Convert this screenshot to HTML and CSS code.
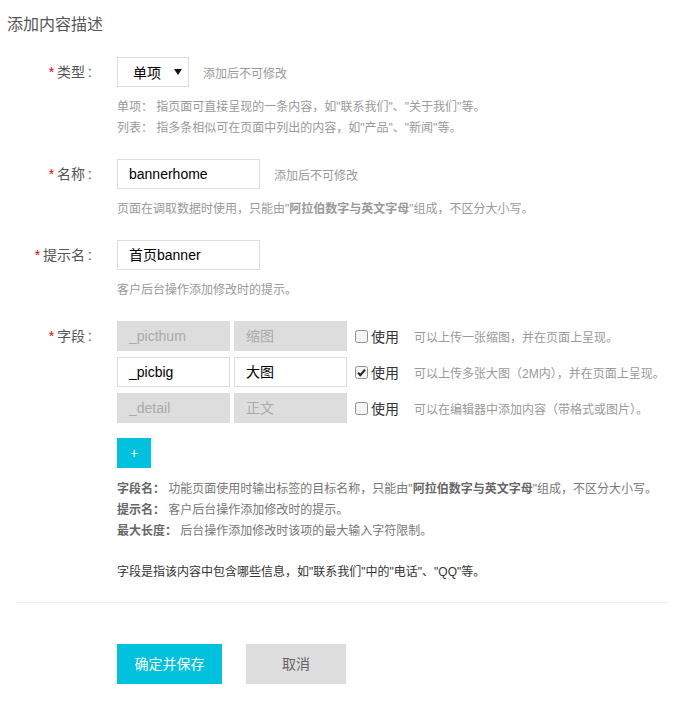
FILE: index.html
```html
<!DOCTYPE html>
<html lang="zh">
<head>
<meta charset="utf-8">
<title>添加内容描述</title>
<link rel="stylesheet" href="styles.css">
</head>
<body>
<h2 class="title">添加内容描述</h2>
<div class="form">
  <div class="row">
    <div class="label"><span class="req">*</span>类型<span class="colon">:</span></div>
    <div class="content">
      <div class="line">
        <div class="select"><span>单项</span><span class="caret"></span></div>
        <span class="hint">添加后不可修改</span>
      </div>
      <div class="desc">单项：&nbsp;指页面可直接呈现的一条内容，如"联系我们"、"关于我们"等。<br>列表：&nbsp;指多条相似可在页面中列出的内容，如"产品"、"新闻"等。</div>
    </div>
  </div>
  <div class="row">
    <div class="label"><span class="req">*</span>名称<span class="colon">:</span></div>
    <div class="content">
      <div class="line">
        <div class="input w143">bannerhome</div>
        <span class="hint">添加后不可修改</span>
      </div>
      <div class="desc">页面在调取数据时使用，只能由"<b>阿拉伯数字与英文字母</b>"组成，不区分大小写。</div>
    </div>
  </div>
  <div class="row">
    <div class="label"><span class="req">*</span>提示名<span class="colon">:</span></div>
    <div class="content">
      <div class="line">
        <div class="input w143">首页banner</div>
      </div>
      <div class="desc">客户后台操作添加修改时的提示。</div>
    </div>
  </div>
  <div class="row">
    <div class="label"><span class="req">*</span>字段<span class="colon">:</span></div>
    <div class="content">
      <div class="fields">
        <div class="line">
          <div class="input w113 disabled">_picthum</div>
          <div class="input w113 disabled gapl">缩图</div>
          <span class="check"><svg width="13" height="13" viewBox="0 0 13 13"><rect x="0.5" y="0.5" width="12" height="12" rx="2" fill="#f4f4f4" stroke="#8f8f8f"/></svg></span>
          <span class="use">使用</span>
          <span class="fdesc">可以上传一张缩图，并在页面上呈现。</span>
        </div>
        <div class="line">
          <div class="input w113">_picbig</div>
          <div class="input w113 gapl">大图</div>
          <span class="check"><svg width="13" height="13" viewBox="0 0 13 13"><rect x="0.5" y="0.5" width="12" height="12" rx="2" fill="#f4f4f4" stroke="#8f8f8f"/><path d="M3 6.8 L5.3 9.2 L10 3.6" fill="none" stroke="#222" stroke-width="2"/></svg></span>
          <span class="use">使用</span>
          <span class="fdesc">可以上传多张大图（2M内），并在页面上呈现。</span>
        </div>
        <div class="line">
          <div class="input w113 disabled">_detail</div>
          <div class="input w113 disabled gapl">正文</div>
          <span class="check"><svg width="13" height="13" viewBox="0 0 13 13"><rect x="0.5" y="0.5" width="12" height="12" rx="2" fill="#f4f4f4" stroke="#8f8f8f"/></svg></span>
          <span class="use">使用</span>
          <span class="fdesc">可以在编辑器中添加内容（带格式或图片）。</span>
        </div>
      </div>
      <div class="plus">+</div>
      <div class="notes">
        <b>字段名：</b>&nbsp;功能页面使用时输出标签的目标名称，只能由"<b>阿拉伯数字与英文字母</b>"组成，不区分大小写。<br>
        <b>提示名：</b>&nbsp;客户后台操作添加修改时的提示。<br>
        <b>最大长度：</b>&nbsp;后台操作添加修改时该项的最大输入字符限制。
      </div>
      <div class="note-main">字段是指该内容中包含哪些信息，如"联系我们"中的"电话"、"QQ"等。</div>
    </div>
  </div>
</div>
<div class="sep"></div>
<div class="actions">
  <div class="btn primary">确定并保存</div>
  <div class="btn cancel">取消</div>
</div>
</body>
</html>
```
FILE: styles.css
```css
html, body {
  margin: 0;
  padding: 0;
  background: #fff;
  font-family: "Liberation Sans", "Noto Sans CJK SC", sans-serif;
  color: #333;
}
.title {
  margin: 0;
  padding: 14px 0 0 7px;
  font-size: 16px;
  line-height: 22px;
  font-weight: normal;
  color: #555;
}
.form {
  padding-top: 21px;
}
.row {
  display: flex;
  align-items: flex-start;
  margin-bottom: 20px;
}
.label {
  width: 92px;
  flex-shrink: 0;
  text-align: right;
  font-size: 14px;
  line-height: 30px;
  color: #555;
}
.req {
  color: #e00;
  margin-right: 3px;
}
.colon {
  margin-left: 3px;
}
.content {
  margin-left: 25px;
}
.line {
  display: flex;
  align-items: center;
  height: 30px;
}
.select {
  box-sizing: border-box;
  width: 72px;
  height: 30px;
  border: 1px solid #ddd;
  display: flex;
  align-items: center;
  justify-content: space-between;
  padding: 0 6px 0 15px;
  font-size: 14px;
  color: #000;
}
.caret {
  width: 0;
  height: 0;
  border-left: 4px solid transparent;
  border-right: 4px solid transparent;
  border-top: 6px solid #111;
}
.hint {
  margin-left: 14px;
  font-size: 12px;
  color: #999;
}
.desc {
  margin-top: 10px;
  font-size: 12px;
  line-height: 21px;
  color: #999;
}
.desc b, .notes b {
  font-weight: bold;
}
.input {
  box-sizing: border-box;
  height: 30px;
  border: 1px solid #ddd;
  background: #fff;
  padding-left: 11px;
  font-size: 14px;
  line-height: 28px;
  color: #000;
  white-space: nowrap;
}
.w143 { width: 143px; }
.w113 { width: 113px; }
.gapl { margin-left: 4px; }
.input.disabled {
  background: #ddd;
  border-color: #ddd;
  color: #aaa;
}
.fields .line {
  margin-bottom: 6px;
}
.fields .line:last-child {
  margin-bottom: 0;
}
.check {
  display: inline-flex;
  margin-left: 8px;
}
.use {
  margin-left: 3px;
  font-size: 14px;
  color: #333;
}
.fdesc {
  margin-left: 15px;
  font-size: 12px;
  color: #999;
  white-space: nowrap;
}
.plus {
  margin-top: 15px;
  width: 34px;
  height: 30px;
  background: #00c1de;
  color: #fff;
  font-size: 14px;
  line-height: 30px;
  text-align: center;
}
.notes {
  margin-top: 11px;
  font-size: 12px;
  line-height: 21px;
  color: #777;
  white-space: nowrap;
}
.notes b {
  color: #666;
}
.note-main {
  margin-top: 20px;
  font-size: 12px;
  line-height: 21px;
  color: #333;
}
.sep {
  margin: -1px 22px 0 16px;
  border-top: 1px solid #eee;
}
.actions {
  display: flex;
  padding: 41px 0 0 117px;
  gap: 24px;
}
.btn {
  height: 40px;
  line-height: 40px;
  text-align: center;
  font-size: 14px;
}
.primary {
  width: 105px;
  background: #00c1de;
  color: #fff;
}
.cancel {
  width: 100px;
  background: #ddd;
  color: #666;
}
```
